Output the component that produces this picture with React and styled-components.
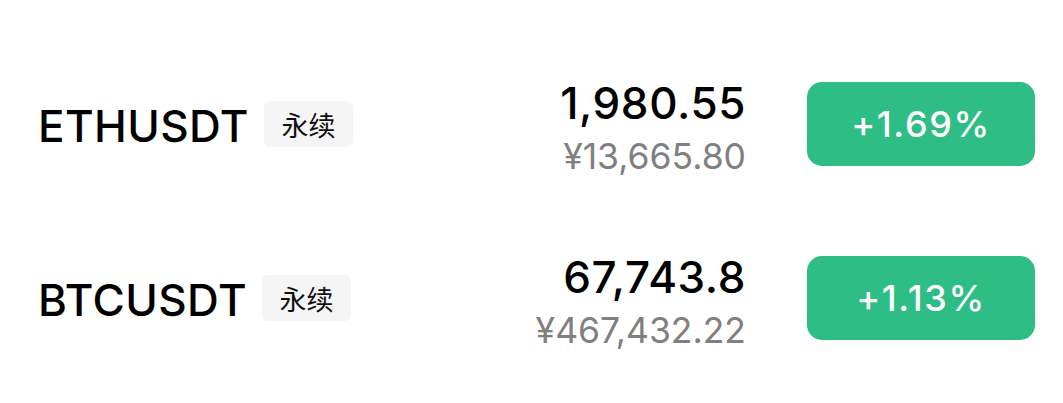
import styled, { createGlobalStyle } from 'styled-components';

const GlobalStyle = createGlobalStyle`
    html, body {
        margin: 0;
        padding: 0;
        background: #ffffff;
    }
    body {
        font-family: 'Inter', 'Noto Sans CJK SC', sans-serif;
        color: #000000;
    }
`;

const tickers = [
    { symbol: 'ETHUSDT', tag: '永续', price: '1,980.55', cny: '¥13,665.80', change: '+1.69%', up: true },
    { symbol: 'BTCUSDT', tag: '永续', price: '67,743.8', cny: '¥467,432.22', change: '+1.13%', up: true },
];

const App = () => {
    return (
        <>
            <GlobalStyle />
            <List>
                {tickers.map((item) => (
                    <Row key={item.symbol}>
                        <Name>
                            <Symbol>{item.symbol}</Symbol>
                            <Tag>{item.tag}</Tag>
                        </Name>
                        <Price>
                            <Last>{item.price}</Last>
                            <Cny>{item.cny}</Cny>
                        </Price>
                        <Change $up={item.up}>{item.change}</Change>
                    </Row>
                ))}
            </List>
        </>
    );
};

const List = styled.div`
    padding: 37px 28px 0 38px;
`;

const Row = styled.div`
    display: flex;
    align-items: center;
    height: 174px;
`;

const Name = styled.div`
    display: flex;
    align-items: center;
    gap: 15px;
    flex: 1;
`;

const Symbol = styled.span`
    font-size: 44px;
    font-weight: 500;
    letter-spacing: 0.4px;
    padding-top: 3px;
`;

const Tag = styled.span`
    display: flex;
    align-items: center;
    justify-content: center;
    width: 89px;
    height: 46px;
    border-radius: 6px;
    background: #f5f5f5;
    font-family: 'Noto Sans CJK SC', sans-serif;
    font-size: 27px;
    color: #111111;
`;

const Price = styled.div`
    display: flex;
    flex-direction: column;
    align-items: flex-end;
    margin-right: 61px;
    padding-top: 11px;
`;

const Last = styled.span`
    font-size: 44px;
    font-weight: 500;
    line-height: 53px;
    letter-spacing: 0.6px;
`;

const Cny = styled.span`
    font-size: 35.5px;
    color: #808080;
    line-height: 53px;
`;

const Change = styled.div`
    display: flex;
    align-items: center;
    justify-content: center;
    width: 228px;
    height: 84px;
    border-radius: 15px;
    background: ${(p) => (p.$up ? '#2ebd85' : '#f6465d')};
    color: #ffffff;
    font-size: 36px;
    font-weight: 500;
    letter-spacing: 1.6px;
`;

export default App;
